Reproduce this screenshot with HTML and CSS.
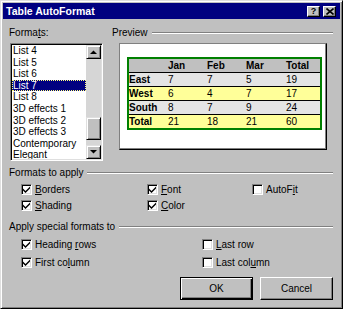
FILE: index.html
```html
<!DOCTYPE html>
<html>
<head>
<meta charset="utf-8">
<title>Table AutoFormat</title>
<link rel="stylesheet" href="styles.css">
</head>
<body>
<div class="window">
  <div class="titlebar">
    <span class="title">Table AutoFormat</span>
    <div class="tbtns">
      <span class="tbtn help">?</span>
      <span class="tbtn"><svg width="8" height="7" viewBox="0 0 8 7"><path d="M0.5 0.5 L7.5 6.5 M7.5 0.5 L0.5 6.5" stroke="#000" stroke-width="1.6" fill="none"/></svg></span>
    </div>
  </div>
  <div class="content">
    <div class="top">
      <div class="leftcol">
        <div class="label">Forma<u>t</u>s:</div>
        <div class="listbox">
          <ul class="items">
            <li>List 4</li>
            <li>List 5</li>
            <li>List 6</li>
            <li class="sel">List 7</li>
            <li>List 8</li>
            <li>3D effects 1</li>
            <li>3D effects 2</li>
            <li>3D effects 3</li>
            <li>Contemporary</li>
            <li>Elegant</li>
          </ul>
          <div class="scrollbar">
            <div class="sbtn"><svg width="7" height="4" viewBox="0 0 7 4"><polygon points="0,4 7,4 3.5,0.5" fill="#000"/></svg></div>
            <div class="track"><div class="thumb"></div></div>
            <div class="sbtn"><svg width="7" height="4" viewBox="0 0 7 4"><polygon points="0,0 7,0 3.5,3.5" fill="#000"/></svg></div>
          </div>
        </div>
      </div>
      <div class="rightcol">
        <div class="grouphead"><span>Preview</span><span class="rule"></span></div>
        <div class="preview">
          <table class="ptable">
            <colgroup><col class="w39"><col class="w39"><col class="w39"><col class="w40"><col></colgroup>
            <thead>
              <tr><th></th><th>Jan</th><th>Feb</th><th>Mar</th><th>Total</th></tr>
            </thead>
            <tbody>
              <tr class="r-gray"><th>East</th><td>7</td><td>7</td><td>5</td><td>19</td></tr>
              <tr class="r-yellow"><th>West</th><td>6</td><td>4</td><td>7</td><td>17</td></tr>
              <tr class="r-gray"><th>South</th><td>8</td><td>7</td><td>9</td><td>24</td></tr>
              <tr class="r-yellow last"><th>Total</th><td>21</td><td>18</td><td>21</td><td>60</td></tr>
            </tbody>
          </table>
        </div>
      </div>
    </div>

    <div class="grouphead g1"><span>Formats to apply</span><span class="rule"></span></div>
    <div class="checks c3">
      <label class="check"><span class="box on"><svg width="7" height="7" viewBox="0 0 7 7"><path d="M0 2.5 L2.5 5 L7 0.5 L7 2.5 L2.5 7 L0 4.5 Z" fill="#000"/></svg></span><span><u>B</u>orders</span></label>
      <label class="check"><span class="box on"><svg width="7" height="7" viewBox="0 0 7 7"><path d="M0 2.5 L2.5 5 L7 0.5 L7 2.5 L2.5 7 L0 4.5 Z" fill="#000"/></svg></span><span><u>F</u>ont</span></label>
      <label class="check"><span class="box"></span><span>AutoF<u>i</u>t</span></label>
      <label class="check"><span class="box on"><svg width="7" height="7" viewBox="0 0 7 7"><path d="M0 2.5 L2.5 5 L7 0.5 L7 2.5 L2.5 7 L0 4.5 Z" fill="#000"/></svg></span><span><u>S</u>hading</span></label>
      <label class="check"><span class="box on"><svg width="7" height="7" viewBox="0 0 7 7"><path d="M0 2.5 L2.5 5 L7 0.5 L7 2.5 L2.5 7 L0 4.5 Z" fill="#000"/></svg></span><span><u>C</u>olor</span></label>
    </div>

    <div class="grouphead g2"><span>Apply special formats to</span><span class="rule"></span></div>
    <div class="checks c2">
      <label class="check"><span class="box on"><svg width="7" height="7" viewBox="0 0 7 7"><path d="M0 2.5 L2.5 5 L7 0.5 L7 2.5 L2.5 7 L0 4.5 Z" fill="#000"/></svg></span><span>Heading <u>r</u>ows</span></label>
      <label class="check"><span class="box"></span><span><u>L</u>ast row</span></label>
      <label class="check"><span class="box on"><svg width="7" height="7" viewBox="0 0 7 7"><path d="M0 2.5 L2.5 5 L7 0.5 L7 2.5 L2.5 7 L0 4.5 Z" fill="#000"/></svg></span><span>First co<u>l</u>umn</span></label>
      <label class="check"><span class="box"></span><span>Last col<u>u</u>mn</span></label>
    </div>

    <div class="buttons">
      <div class="btn default">OK</div>
      <div class="btn">Cancel</div>
    </div>
  </div>
</div>
</body>
</html>
```

FILE: styles.css
```css
* { box-sizing: border-box; }
html, body { margin: 0; padding: 0; }
body {
  width: 343px;
  height: 309px;
  background: #c0c0c0;
  font-family: "Liberation Sans", Arial, sans-serif;
  font-size: 10px;
  color: #000;
}
.window {
  width: 343px;
  height: 309px;
  background: #c0c0c0;
  border: 1px solid;
  border-color: #dfdfdf #000 #000 #dfdfdf;
  box-shadow: inset 1px 1px #fff, inset -1px -1px #808080;
  padding: 2px;
  display: flex;
  flex-direction: column;
}
.titlebar {
  height: 16px;
  flex: none;
  background: #000080;
  color: #fff;
  display: flex;
  align-items: flex-start;
  padding: 0 4px 0 3px;
}
.title {
  flex: 1;
  font-weight: bold;
  font-size: 10.5px;
  line-height: 16px;
  white-space: nowrap;
}
.tbtns { display: flex; gap: 3px; margin-top: 3px; }
.tbtn {
  width: 13px;
  height: 11px;
  background: #c0c0c0;
  border: 1px solid;
  border-color: #fff #000 #000 #fff;
  box-shadow: inset -1px -1px #808080;
  display: flex;
  align-items: center;
  justify-content: center;
  color: #000;
  font-weight: bold;
  font-size: 9px;
  line-height: 9px;
}
.content {
  flex: 1;
  padding: 8px 7px 0 6px;
  display: flex;
  flex-direction: column;
}
.top { display: flex; }
.leftcol {
  width: 93px;
  margin-left: 1px;
  display: flex;
  flex-direction: column;
}
.label { height: 12px; line-height: 12px; margin-left: -1px; }
.listbox {
  margin-top: 4px;
  height: 118px;
  background: #fff;
  border: 1px solid;
  border-color: #808080 #fff #fff #808080;
  box-shadow: inset 1px 1px #000, inset -1px -1px #dfdfdf;
  padding: 1px;
  display: flex;
}
.items {
  flex: 1;
  list-style: none;
  margin: 0;
  padding: 0;
  overflow: hidden;
}
.items li {
  height: 11.6px;
  line-height: 11.6px;
  padding-left: 1px;
  white-space: nowrap;
}
.items li.sel {
  background: #000080;
  color: #fff;
  outline: 1px dotted #ffff80;
  outline-offset: -1px;
}
.scrollbar {
  width: 15px;
  display: flex;
  flex-direction: column;
}
.sbtn, .thumb {
  background: #c0c0c0;
  border: 1px solid;
  border-color: #dfdfdf #000 #000 #dfdfdf;
  box-shadow: inset 1px 1px #fff, inset -1px -1px #808080;
}
.sbtn {
  height: 14px;
  display: flex;
  align-items: center;
  justify-content: center;
}
.track { flex: 1; background: #d6d6d6; }
.thumb { margin-top: 58px; height: 23px; }

.rightcol {
  flex: 1;
  margin-left: 9px;
  display: flex;
  flex-direction: column;
}
.grouphead {
  display: flex;
  align-items: center;
  height: 12px;
  line-height: 12px;
  white-space: nowrap;
}
.rule {
  flex: 1;
  margin-left: 4px;
  height: 2px;
  border-top: 1px solid #808080;
  border-bottom: 1px solid #fff;
}
.preview {
  margin: 4px 0 0 7px;
  width: 208px;
  height: 107px;
  background: #fff;
  border: 1px solid;
  border-color: #808080 #000 #000 #808080;
  box-shadow: inset -1px -1px #808080;
  padding: 13px 0 0 7px;
}
.ptable {
  width: 195px;
  table-layout: fixed;
  border-collapse: separate;
  border-spacing: 0;
  border: 2px solid #008000;
}
.w39 { width: 39px; }
.w40 { width: 40px; }
.ptable th, .ptable td {
  padding: 0;
  height: 14px;
  line-height: 13px;
  text-align: left;
  border-bottom: 1px solid #000;
  white-space: nowrap;
  font-size: 10px;
}
.ptable th { font-weight: bold; }
.ptable td { font-weight: normal; }
.ptable thead th { background: #c0c0c0; }
.r-gray th, .r-gray td { background: #e4e4e4; }
.r-yellow th, .r-yellow td { background: #ffff99; }
.last th, .last td { border-bottom: none; height: 12px; }

.g1 { margin-top: 6px; }
.g2 { margin-top: 8px; }
.checks {
  display: grid;
  padding-left: 12px;
  margin-top: 2px;
  grid-auto-rows: 16px;
}
.c3 { grid-template-columns: 126px 105px 1fr; }
.c2 { grid-template-columns: 181px 1fr; grid-auto-rows: 18px; }
.check {
  display: flex;
  align-items: center;
  gap: 3px;
  white-space: nowrap;
}
.box {
  flex: none;
  width: 11px;
  height: 11px;
  background: #fff;
  border: 1px solid;
  border-color: #808080 #fff #fff #808080;
  box-shadow: inset 1px 1px #000, inset -1px -1px #dfdfdf;
  display: flex;
  align-items: center;
  justify-content: center;
}
.box svg { display: block; }

.buttons {
  display: flex;
  justify-content: flex-end;
  gap: 7px;
  margin-top: 6px;
}
.btn {
  width: 73px;
  height: 23px;
  background: #c0c0c0;
  border: 1px solid;
  border-color: #fff #000 #000 #fff;
  box-shadow: inset -1px -1px #808080;
  display: flex;
  align-items: center;
  justify-content: center;
}
.btn.default {
  border-color: #000;
  box-shadow: inset 1px 1px #fff, inset -1px -1px #000, inset -2px -2px #808080;
}
```
